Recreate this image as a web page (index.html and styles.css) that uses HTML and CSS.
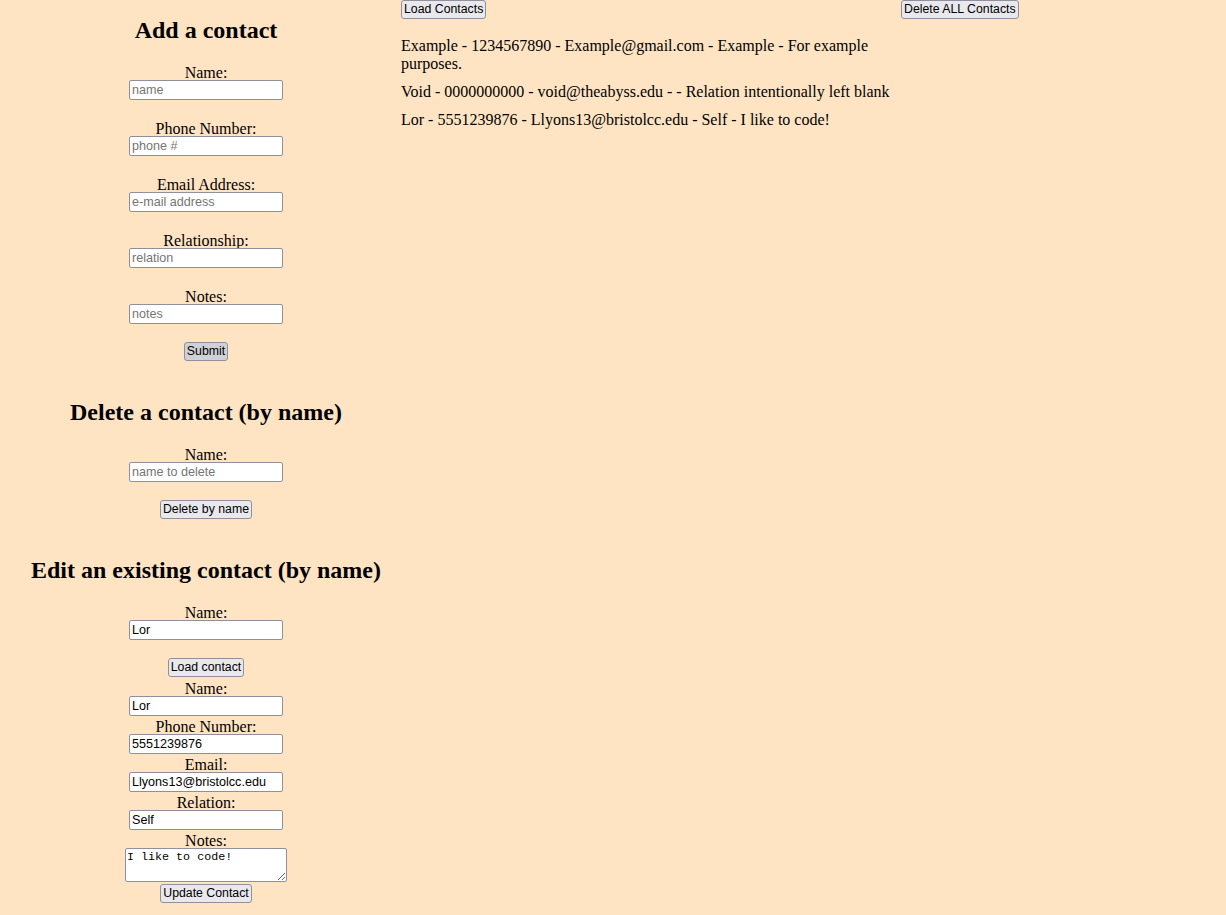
FILE: index.html
```html
<!DOCTYPE html>
<html lang="en">
<head>
<meta charset="utf-8">
<title>Contacts</title>
<link rel="stylesheet" href="styles.css">
</head>
<body>
<div class="page">
  <div class="left">
    <section class="block block-add">
      <h2 class="title">Add a contact</h2>
      <form class="form form-spaced">
        <label class="label">Name:</label>
        <input class="field" type="text" placeholder="name">
        <label class="label">Phone Number:</label>
        <input class="field" type="text" placeholder="phone #">
        <label class="label">Email Address:</label>
        <input class="field" type="text" placeholder="e-mail address">
        <label class="label">Relationship:</label>
        <input class="field" type="text" placeholder="relation">
        <label class="label">Notes:</label>
        <input class="field" type="text" placeholder="notes">
        <button class="btn btn-active" type="button">Submit</button>
      </form>
    </section>

    <section class="block block-gap">
      <h2 class="title">Delete a contact (by name)</h2>
      <form class="form form-spaced">
        <label class="label">Name:</label>
        <input class="field" type="text" placeholder="name to delete">
        <button class="btn" type="button">Delete by name</button>
      </form>
    </section>

    <section class="block block-gap">
      <h2 class="title">Edit an existing contact (by name)</h2>
      <form class="form form-spaced">
        <label class="label">Name:</label>
        <input class="field" type="text" value="Lor">
        <button class="btn btn-load" type="button">Load contact</button>
      </form>
      <form class="form">
        <label class="label">Name:</label>
        <input class="field" type="text" value="Lor">
        <label class="label">Phone Number:</label>
        <input class="field" type="text" value="5551239876">
        <label class="label">Email:</label>
        <input class="field" type="text" value="Llyons13@bristolcc.edu">
        <label class="label">Relation:</label>
        <input class="field" type="text" value="Self">
        <label class="label">Notes:</label>
        <textarea class="notes">I like to code!</textarea>
        <button class="btn btn-update" type="button">Update Contact</button>
      </form>
    </section>
  </div>

  <div class="middle">
    <button class="btn btn-top" type="button">Load Contacts</button>
    <div class="list">
      <div class="item">Example - 1234567890 - Example@gmail.com - Example - For example purposes.</div>
      <div class="item">Void - 0000000000 - void@theabyss.edu - - Relation intentionally left blank</div>
      <div class="item">Lor - 5551239876 - Llyons13@bristolcc.edu - Self - I like to code!</div>
    </div>
  </div>

  <div class="right">
    <button class="btn btn-top" type="button">Delete ALL Contacts</button>
  </div>
</div>
</body>
</html>
```

FILE: styles.css
```css
html, body {
  margin: 0;
  padding: 0;
}

body {
  background: #ffe4c4;
  color: #000;
  font-family: "Liberation Serif", "Times New Roman", serif;
  font-size: 16px;
}

.page {
  display: grid;
  grid-template-columns: 401px 500px auto;
  align-items: start;
  min-height: 915px;
}

.left {
  padding-left: 11px;
  display: flex;
  flex-direction: column;
  align-items: center;
}

.block {
  display: flex;
  flex-direction: column;
  align-items: center;
}

.title {
  margin: 16px 0 18px;
  font-size: 24px;
  line-height: 28px;
  font-weight: bold;
  white-space: nowrap;
}

.block-gap .title {
  margin-top: 37px;
  margin-bottom: 18px;
}

.form {
  display: flex;
  flex-direction: column;
  align-items: center;
  margin: 0;
}

.label {
  box-sizing: border-box;
  height: 18px;
  padding-top: 1.5px;
  line-height: 18px;
}

.field {
  box-sizing: border-box;
  width: 154px;
  height: 20px;
  margin: 0;
  padding: 1px 2px;
  border: 1px solid #8f8f9d;
  border-radius: 2px;
  background: #fff;
  font-family: "Liberation Sans", Arial, sans-serif;
  font-size: 12.6px;
  color: #000;
}

.field::placeholder {
  color: #757575;
}

.form-spaced .field {
  margin-bottom: 18px;
}

.btn {
  box-sizing: border-box;
  height: 19px;
  margin: 0;
  padding: 0 2px;
  border: 1px solid #8f8f9d;
  border-radius: 3px;
  background: #e9e9ed;
  color: #000;
  font-family: "Liberation Sans", Arial, sans-serif;
  font-size: 12.3px;
  line-height: 17px;
}

.btn-active {
  background: #d0d0d7;
}

.btn-load {
  margin-bottom: 1px;
}

.notes {
  box-sizing: border-box;
  width: 162px;
  height: 34px;
  margin: 0;
  padding: 2px 1px;
  border: 1px solid #8f8f9d;
  border-radius: 2px;
  background: #fff;
  font-family: "Liberation Mono", "Courier New", monospace;
  font-size: 11.7px;
  line-height: 13px;
  color: #000;
  resize: both;
}

.btn-update {
  margin-top: 2px;
}

.middle {
  display: flex;
  flex-direction: column;
  align-items: flex-start;
}

.list {
  margin-top: 18px;
}

.item {
  line-height: 18px;
  margin-bottom: 10px;
}

.right {
  display: flex;
  align-items: flex-start;
}
```
